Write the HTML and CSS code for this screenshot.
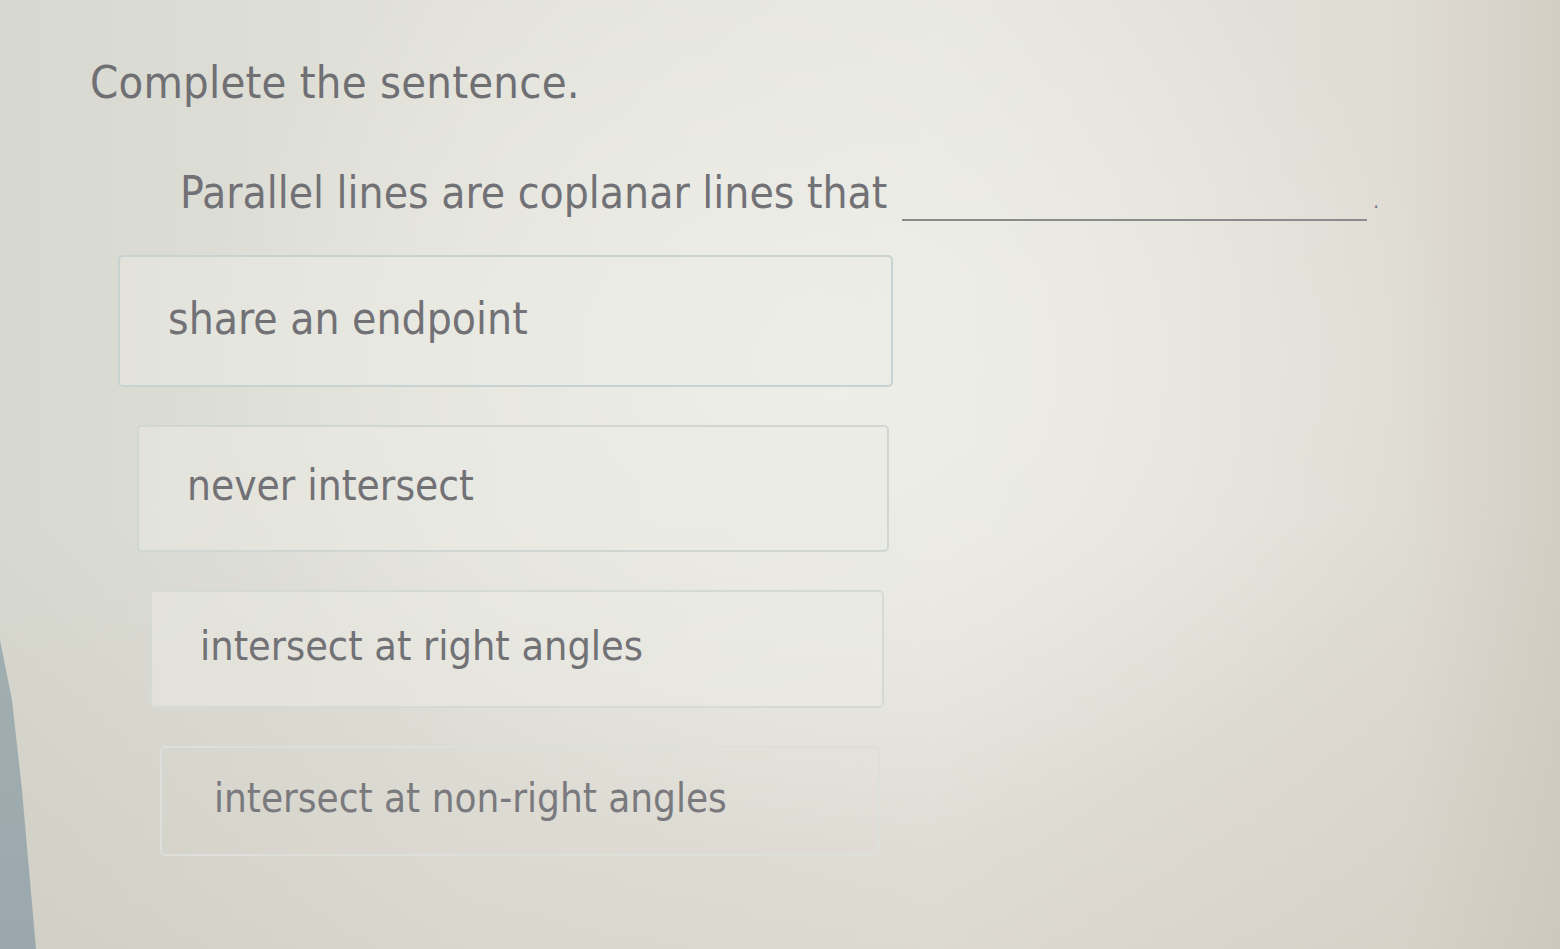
FILE: index.html
```html
<!DOCTYPE html>
<html lang="en">
<head>
<meta charset="utf-8">
<title>Complete the sentence</title>
<link rel="stylesheet" href="styles.css">
</head>
<body>
<main class="question">
  <h1 class="prompt">Complete the sentence.</h1>
  <p class="sentence">
    <span class="stem">Parallel lines are coplanar lines that</span>
    <span class="blank"></span><span class="stop">.</span>
  </p>
  <ul class="choices">
    <li class="choice choice-1">share an endpoint</li>
    <li class="choice choice-2">never intersect</li>
    <li class="choice choice-3">intersect at right angles</li>
    <li class="choice choice-4">intersect at non-right angles</li>
  </ul>
</main>
</body>
</html>
```

FILE: styles.css
```css
html, body {
  margin: 0;
  height: 100%;
}

body {
  position: relative;
  overflow: hidden;
  background:
    radial-gradient(ellipse 900px 700px at 820px 360px, rgba(240, 240, 234, 0.85), rgba(240, 240, 234, 0) 70%),
    linear-gradient(180deg, rgba(0, 0, 0, 0) 55%, rgba(190, 180, 165, 0.25) 100%),
    linear-gradient(90deg, #d7d8d0 0%, #e2e2db 30%, #e7e6e0 60%, #dfdcd4 90%, #d3cec4 100%);
  font-family: "DejaVu Sans Condensed", "DejaVu Sans", sans-serif;
  font-stretch: condensed;
  color: #727276;
}

/* bezel edge along the lower left */
body::before {
  content: "";
  position: absolute;
  left: 0;
  top: 0;
  width: 40px;
  height: 100%;
  background: linear-gradient(180deg, #a3b0b0 60%, #9aa8ae 100%);
  clip-path: polygon(0 640px, 12px 700px, 22px 790px, 36px 949px, 0 949px);
}

.question {
  padding: 52px 0 0 90px;
}

.prompt {
  margin: 0;
  font-size: 45px;
  font-weight: normal;
  line-height: 62px;
  color: #707074;
  letter-spacing: 0.2px;
}

.sentence {
  display: flex;
  align-items: flex-end;
  margin: 51px 0 0 90px;
  font-size: 44px;
  line-height: 56px;
}

.blank {
  width: 465px;
  margin: 0 0 0 15px;
  border-bottom: 2px solid #8a8c8c;
}

.stop {
  margin-left: 6px;
  font-size: 20px;
  line-height: 20px;
  margin-bottom: 10px;
}

.choices {
  list-style: none;
  margin: 34px 0 0 0;
  padding: 0;
  display: flex;
  flex-direction: column;
  gap: 38px;
}

.choice {
  display: flex;
  align-items: center;
  box-sizing: border-box;
  padding: 0 0 6px 48px;
  border: 2px solid #c8d2d0;
  border-radius: 5px;
  background: rgba(236, 236, 230, 0.5);
}

.choice-1 {
  margin-left: 28px;
  width: 775px;
  height: 132px;
  font-size: 44px;
}

.choice-2 {
  margin-left: 47px;
  width: 752px;
  height: 127px;
  font-size: 42px;
  border-color: #d0d7d3;
}

.choice-3 {
  margin-left: 60px;
  width: 734px;
  height: 118px;
  font-size: 41px;
  border-color: #d6dad5;
}

.choice-4 {
  margin-left: 70px;
  width: 720px;
  height: 110px;
  font-size: 40px;
  border-color: #dddfdb;
  background: transparent;
  color: #7a7a7e;
  padding-left: 52px;
}
```
